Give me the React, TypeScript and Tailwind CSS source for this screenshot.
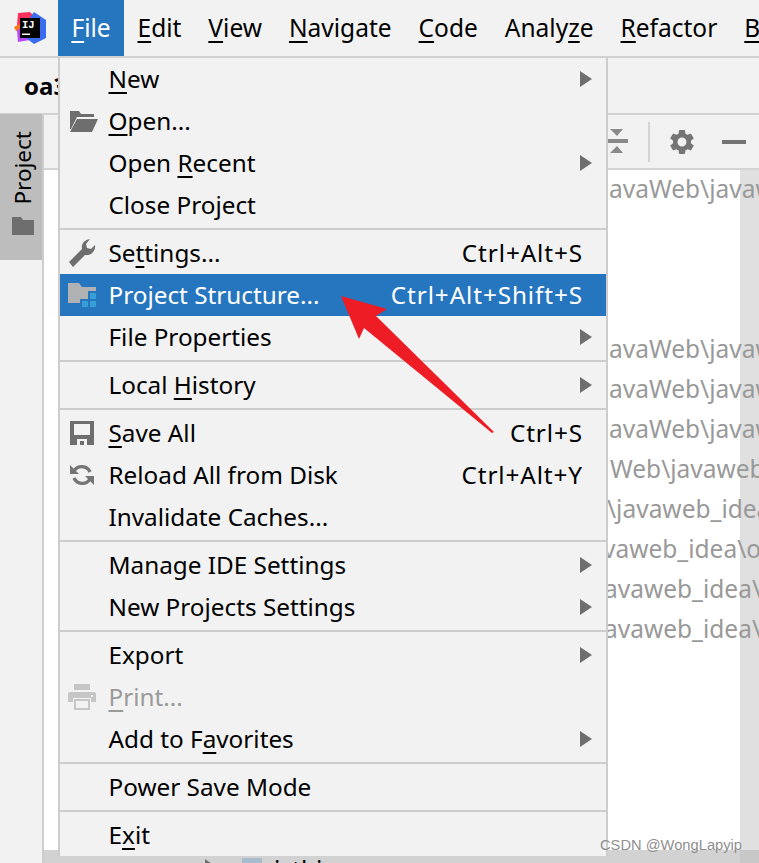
import React from "react";
import { MdSettings } from "react-icons/md";

const U = ({ children }: { children: React.ReactNode }) => (
  <span className="underline decoration-2 underline-offset-[4px] [text-decoration-skip-ink:none]">{children}</span>
);

const Logo = () => (
  <svg width="32" height="32" viewBox="0 0 32 32" className="block">
    <polygon points="4,1 16,0 22,6 6,20 3,14" fill="#fe315d" />
    <polygon points="0,15 6,12 8,20 2,19" fill="#f97a12" />
    <polygon points="3,18 10,14 16,28 4,30" fill="#b74af7" />
    <polygon points="20,0 32,8 32,26 20,32 12,26 14,8" fill="#3a6cf0" />
    <rect x="6" y="6" width="20" height="20" fill="#000" />
    <text x="8" y="16" fill="#fff" fontSize="10.5" fontWeight="700" fontFamily="'Liberation Mono', monospace">IJ</text>
    <rect x="8" y="21.5" width="8" height="1.5" fill="#fff" />
  </svg>
);

const FolderOpen = () => (
  <svg width="28" height="21" viewBox="0 0 28 21" className="ml-[4px] block">
    <path d="M0 0H9L11 3H24V6H7L1 18H0Z M7 8H28L22 21H0Z" fill="#6e6e6e" />
  </svg>
);
const Wrench = () => (
  <svg width="28" height="28" viewBox="0 0 28 28" className="block">
    <path d="M1 23L14 10C13 5 16 1 22 0L18 5L19 9L23 10L27 6C28 12 23 17 17 16L5 28Z" fill="#6e6e6e" />
  </svg>
);
const Structure = () => (
  <svg width="28" height="24" viewBox="0 0 28 24" className="block">
    <polygon points="0,0 11,0 14,4 28,4 28,8 20,8 20,16 12,16 12,20 0,20" fill="#afb1b3" />
    <rect x="22" y="10" width="6" height="6" fill="#389fd6" />
    <rect x="14" y="18" width="6" height="6" fill="#389fd6" />
    <rect x="22" y="18" width="6" height="6" fill="#389fd6" />
  </svg>
);
const Save = () => (
  <svg width="24" height="24" viewBox="0 0 24 24" className="block">
    <rect width="24" height="24" fill="#6e6e6e" />
    <rect x="4" y="3" width="16" height="11" fill="#f2f2f2" />
    <rect x="7" y="18" width="10" height="6" fill="#f2f2f2" />
    <rect x="10" y="20" width="4" height="4" fill="#6e6e6e" />
  </svg>
);
const Reload = () => (
  <svg width="24" height="24" viewBox="0 0 24 24" className="block">
    <path d="M4 8A9 9 0 0 1 20 9" fill="none" stroke="#757575" strokeWidth="3.4" />
    <path d="M20 16A9 9 0 0 1 4 15" fill="none" stroke="#757575" strokeWidth="3.4" />
    <polygon points="0,2 0,11 9,11" fill="#757575" />
    <polygon points="24,22 24,13 15,13" fill="#757575" />
  </svg>
);
const Printer = () => (
  <svg width="28" height="26" viewBox="0 0 28 26" className="block">
    <rect x="6" y="0" width="16" height="6" fill="#c6c6c6" />
    <path d="M2 8H26Q28 8 28 10V18H23V14H5V18H0V10Q0 8 2 8Z" fill="#c6c6c6" />
    <rect x="7" y="16" width="14" height="9" fill="none" stroke="#c6c6c6" strokeWidth="2" />
    <rect x="23" y="11" width="2" height="2" fill="#f2f2f2" />
  </svg>
);
const Chevron = () => (
  <svg width="12" height="16" viewBox="0 0 12 16" className="block">
    <polygon points="0,0 12,8 0,16" fill="#6e6e6e" />
  </svg>
);

type Item = {
  label: React.ReactNode;
  icon?: React.ReactNode;
  shortcut?: string;
  sub?: boolean;
  active?: boolean;
  disabled?: boolean;
};

const groups: Item[][] = [
  [
    { label: <><U>N</U>ew</>, sub: true },
    { label: <><U>O</U>pen...</>, icon: <FolderOpen /> },
    { label: <>Open <U>R</U>ecent</>, sub: true },
    { label: "Close Project" },
  ],
  [
    { label: <>Se<U>t</U>tings...</>, icon: <Wrench />, shortcut: "Ctrl+Alt+S" },
    { label: "Project Structure...", icon: <Structure />, shortcut: "Ctrl+Alt+Shift+S", active: true },
    { label: "File Properties", sub: true },
  ],
  [{ label: <>Local <U>H</U>istory</>, sub: true }],
  [
    { label: <><U>S</U>ave All</>, icon: <Save />, shortcut: "Ctrl+S" },
    { label: "Reload All from Disk", icon: <Reload />, shortcut: "Ctrl+Alt+Y" },
    { label: "Invalidate Caches..." },
  ],
  [
    { label: "Manage IDE Settings", sub: true },
    { label: "New Projects Settings", sub: true },
  ],
  [
    { label: "Export", sub: true },
    { label: <><U>P</U>rint...</>, icon: <Printer />, disabled: true },
    { label: <>Add to F<U>a</U>vorites</>, sub: true },
  ],
  [{ label: "Power Save Mode" }],
  [{ label: <>E<U>x</U>it</> }],
];

const menuBar: { label: React.ReactNode; active?: boolean }[] = [
  { label: <><U>F</U>ile</>, active: true },
  { label: <><U>E</U>dit</> },
  { label: <><U>V</U>iew</> },
  { label: <><U>N</U>avigate</> },
  { label: <><U>C</U>ode</> },
  { label: <>Analy<U>z</U>e</> },
  { label: <><U>R</U>efactor</> },
  { label: <><U>B</U>uild</> },
];

const paths: { text: string; pad: string }[] = [
  { text: "avaWeb\\javaweb", pad: "pl-[565px]" },
  { text: "avaWeb\\javaweb", pad: "pl-[565px]" },
  { text: "avaWeb\\javaweb", pad: "pl-[565px]" },
  { text: "Web\\javaweb_idea", pad: "pl-[566px]" },
  { text: "\\javaweb_idea", pad: "pl-[563px]" },
  { text: "vaweb_idea\\oa", pad: "pl-[559px]" },
  { text: "avaweb_idea\\oa", pad: "pl-[560px]" },
  { text: "avaweb_idea\\oa", pad: "pl-[560px]" },
];

function Row({ item }: { item: Item }) {
  const color = item.active ? "bg-[#2675bf] text-white" : item.disabled ? "text-[#9a9a9a]" : "text-black";
  return (
    <div className={`flex h-[42px] items-center text-[24.3px] ${color}`}>
      <div className="flex w-[48.5px] shrink-0 items-center justify-center pr-[4.5px]">{item.icon}</div>
      <div className="flex-1 whitespace-nowrap">{item.label}</div>
      {item.shortcut && <div className="whitespace-nowrap pr-[23px] tracking-[0.9px]">{item.shortcut}</div>}
      {item.sub && <div className="pr-[14px]"><Chevron /></div>}
    </div>
  );
}

export default function App() {
  return (
    <div className="relative flex h-[863px] w-[759px] flex-col overflow-hidden bg-[#f2f2f2] font-['Noto_Sans','Open_Sans',sans-serif] text-[24.5px] text-black">
      {/* menu bar */}
      <div className="flex h-[58px] shrink-0 border-b-2 border-[#d2d2d2]">
        <div className="flex w-[58px] shrink-0 items-center justify-center pl-[2px]"><Logo /></div>
        {menuBar.map((m, i) => (
          <div key={i} className={`flex h-[56px] shrink-0 items-center ${m.active ? "w-[66px] justify-center bg-[#2675bf] text-white" : "px-[13.5px]"}`}>{m.label}</div>
        ))}
      </div>
      {/* nav bar */}
      <div className="flex h-[57px] shrink-0 items-center border-b-2 border-[#d2d2d2] pl-[24px] text-[24px] font-bold">oa3</div>
      {/* body */}
      <div className="flex min-h-0 flex-1">
        <div className="w-[44px] shrink-0 border-r-2 border-[#cdcdcd]">
          <div className="-mt-[1px] flex h-[146px] w-[42px] flex-col items-center bg-[#bdbdbd] pl-[4px] pt-[17px]">
            <span className="rotate-180 text-[22.5px] leading-[24px] [writing-mode:vertical-rl]">Project</span>
            <svg width="22" height="18" viewBox="0 0 22 18" className="mt-[12px] block">
              <path d="M0 0H9L11 3H22V18H0Z" fill="#6e6e6e" />
            </svg>
          </div>
        </div>
        <div className="flex min-w-0 flex-1 flex-col">
          <div className="flex h-[55px] shrink-0 items-center justify-end border-b-2 border-[#d4d4d4] pr-[13px]">
            <svg width="20" height="26" viewBox="0 0 20 26" className="block">
              <polygon points="2,0 15,0 9,7" fill="#8a8a8a" />
              <rect x="0" y="10" width="20" height="4" fill="#8a8a8a" />
              <polygon points="2,24 15,24 9,17" fill="#8a8a8a" />
            </svg>
            <div className="ml-[20px] h-[40px] w-[2px] bg-[#d4d4d4]" />
            <MdSettings size={30} color="#757575" className="ml-[17px]" />
            <div className="ml-[25px] h-[4px] w-[24px] bg-[#757575]" />
          </div>
          <div className="flex min-h-0 flex-1">
            <div className="relative z-10 min-w-0 flex-1 bg-white text-[#999999]">
              <div className="flex h-[38px] items-center whitespace-nowrap pl-[565px]">avaWeb\javaweb</div>
              <div className="h-[121px]" />
              {paths.map((p, i) => (
                <div key={i} className={`flex h-[40px] items-center whitespace-nowrap ${p.pad}`}>{p.text}</div>
              ))}
            </div>
            <div className="w-[19px] shrink-0 bg-[#e0e0e0]" />
          </div>
          <div className="relative z-20 flex h-[13px] shrink-0 overflow-hidden bg-[#d2d2d2]">
            <div className="flex flex-1 items-start pl-[161px] pt-[8px]">
              <svg width="7" height="10" viewBox="0 0 7 10" className="mt-[1px] block">
                <polygon points="0,0 7,5 0,10" fill="#6e6e6e" />
              </svg>
              <div className="ml-[30px] h-[12px] w-[20px] bg-[#a9bccb]" />
              <div className="-mt-[6px] ml-[12px] text-black">isthi</div>
            </div>
            <div className="w-[19px] shrink-0 bg-[#c8c8c8]" />
          </div>
        </div>
      </div>

      {/* file menu */}
      <div className="absolute left-[58px] top-[58px] z-30 h-[798px] w-[550px] border-x-2 border-[#cdcdcd] bg-[#f2f2f2]">
        {groups.map((g, i) => (
          <div key={i}>
            {i > 0 && <div className="my-[2px] h-[2px] bg-[#cdcdcd]" />}
            {g.map((item, j) => <Row key={j} item={item} />)}
          </div>
        ))}
      </div>

      {/* annotation arrow */}
      <svg width="160" height="145" viewBox="0 0 160 145" className="pointer-events-none absolute left-[340px] top-[295px] z-40">
        <polygon points="1,1 47,14 36,21 154,137 152,138 24,33 19,44" fill="#ee1c25" />
      </svg>

      {/* watermark */}
      <div className="absolute left-[600px] top-[834px] z-40 whitespace-nowrap font-['Liberation_Sans',sans-serif] text-[14.7px] text-[#8f8f8f]">CSDN @WongLapyip</div>
    </div>
  );
}
